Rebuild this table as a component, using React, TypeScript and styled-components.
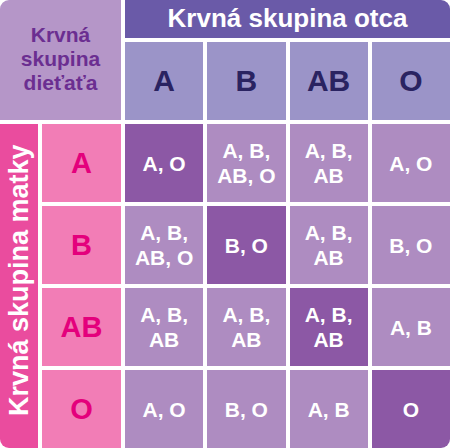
import { Fragment } from "react";
import styled, { createGlobalStyle } from "styled-components";

const GlobalStyle = createGlobalStyle`
  html, body {
    margin: 0;
    padding: 0;
    background: #ffffff;
  }
  body {
    font-family: "Liberation Sans", Arial, sans-serif;
  }
`;

const Table = styled.div`
  width: 450px;
  height: 448px;
  display: grid;
  grid-template-columns: 38px 79px repeat(4, 1fr);
  grid-template-rows: 38px 1fr repeat(4, 1fr);
  gap: 4px;
  background: #ffffff;
  border-radius: 9px;
  overflow: hidden;
  font-weight: 700;
`;

const Cell = styled.div`
  display: flex;
  align-items: center;
  justify-content: center;
  text-align: center;
`;

const Corner = styled(Cell)`
  grid-column: 1 / 3;
  grid-row: 1 / 3;
  background: #b596c8;
  color: #6b2e91;
  font-size: 21px;
  line-height: 24px;
  padding-bottom: 2px;
`;

const FatherTitle = styled(Cell)`
  grid-column: 3 / 7;
  grid-row: 1;
  background: #6a5aa8;
  color: #ffffff;
  font-size: 26px;
  padding-bottom: 1px;
`;

/* rotated 180deg, so top padding nudges the text up on screen */
const MotherTitle = styled(Cell)`
  grid-column: 1;
  grid-row: 3 / 7;
  background: #ea4c9e;
  color: #ffffff;
  font-size: 27px;
  writing-mode: vertical-rl;
  transform: rotate(180deg);
  padding-top: 12px;
  padding-right: 1px;
`;

const FatherType = styled(Cell)`
  background: #9b94c8;
  color: #2a2361;
  font-size: 30px;
`;

const MotherType = styled(Cell)`
  background: #f27db6;
  color: #e4007c;
  font-size: 29px;
`;

const Result = styled(Cell)<{ $dark?: boolean }>`
  background: ${(p) => (p.$dark ? "#8c58a5" : "#ae8cc1")};
  color: #ffffff;
  font-size: 21px;
  line-height: 25px;
`;

const types = ["A", "B", "AB", "O"];

const results: string[][] = [
  ["A, O", "A, B,\nAB, O", "A, B,\nAB", "A, O"],
  ["A, B,\nAB, O", "B, O", "A, B,\nAB", "B, O"],
  ["A, B,\nAB", "A, B,\nAB", "A, B,\nAB", "A, B"],
  ["A, O", "B, O", "A, B", "O"],
];

const Lines = ({ text }: { text: string }) => (
  <span>
    {text.split("\n").map((line, i) => (
      <div key={i}>{line}</div>
    ))}
  </span>
);

export default function App() {
  return (
    <>
      <GlobalStyle />
      <Table>
        <Corner>
          <Lines text={"Krvná\nskupina\ndieťaťa"} />
        </Corner>
        <FatherTitle>Krvná skupina otca</FatherTitle>
        {types.map((t) => (
          <FatherType key={t}>{t}</FatherType>
        ))}
        <MotherTitle>Krvná skupina matky</MotherTitle>
        {types.map((m, r) => (
          <Fragment key={m}>
            <MotherType>{m}</MotherType>
            {results[r].map((res, c) => (
              <Result key={c} $dark={r === c}>
                <Lines text={res} />
              </Result>
            ))}
          </Fragment>
        ))}
      </Table>
    </>
  );
}
